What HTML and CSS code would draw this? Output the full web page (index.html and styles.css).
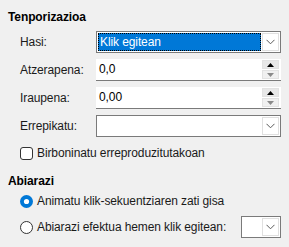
FILE: index.html
```html
<!DOCTYPE html>
<html>
<head>
<meta charset="utf-8">
<link rel="stylesheet" href="styles.css">
</head>
<body>
<div class="panel">
  <div class="heading">Tenporizazioa</div>
  <div class="form">
    <div class="label">Hasi:</div>
    <div class="combo focus">
      <div class="combo-value"><span class="sel">Klik egitean</span></div>
      <div class="combo-btn"><svg width="9" height="6" viewBox="0 0 9 6"><path d="M0.5 0.8 L4.5 4.8 L8.5 0.8" fill="none" stroke="#5a5a5a" stroke-width="1"/></svg></div>
    </div>

    <div class="label">Atzerapena:</div>
    <div class="spin">
      <div class="spin-value">0,0</div>
      <div class="spin-btns">
        <div class="sbtn up"><svg width="7" height="4" viewBox="0 0 7 4"><path d="M0 4 L3.5 0 L7 4 Z" fill="#000"/></svg></div>
        <div class="sbtn down"><svg width="7" height="4" viewBox="0 0 7 4"><path d="M0 0 L3.5 4 L7 0 Z" fill="#8a8a8a"/></svg></div>
      </div>
    </div>

    <div class="label">Iraupena:</div>
    <div class="spin">
      <div class="spin-value">0,00</div>
      <div class="spin-btns">
        <div class="sbtn up"><svg width="7" height="4" viewBox="0 0 7 4"><path d="M0 4 L3.5 0 L7 4 Z" fill="#000"/></svg></div>
        <div class="sbtn down"><svg width="7" height="4" viewBox="0 0 7 4"><path d="M0 0 L3.5 4 L7 0 Z" fill="#8a8a8a"/></svg></div>
      </div>
    </div>

    <div class="label">Errepikatu:</div>
    <div class="combo">
      <div class="combo-value"></div>
      <div class="combo-btn"><svg width="9" height="6" viewBox="0 0 9 6"><path d="M0.5 0.8 L4.5 4.8 L8.5 0.8" fill="none" stroke="#5a5a5a" stroke-width="1"/></svg></div>
    </div>
  </div>

  <div class="option check-row">
    <span class="checkbox"></span>
    <span>Birboninatu erreproduzitutakoan</span>
  </div>

  <div class="heading second">Abiarazi</div>

  <div class="option radio-row first">
    <svg class="radio" width="13" height="13" viewBox="0 0 13 13"><circle cx="6.5" cy="6.5" r="6.5" fill="#0078d7"/><circle cx="6.5" cy="6.5" r="2.6" fill="#fff"/></svg>
    <span>Animatu klik-sekuentziaren zati gisa</span>
  </div>
  <div class="option radio-row">
    <svg class="radio" width="13" height="13" viewBox="0 0 13 13"><circle cx="6.5" cy="6.5" r="6" fill="#fff" stroke="#333" stroke-width="1"/></svg>
    <span class="grow">Abiarazi efektua hemen klik egitean:</span>
    <div class="combo small">
      <div class="combo-value"></div>
      <div class="combo-btn"><svg width="9" height="6" viewBox="0 0 9 6"><path d="M0.5 0.8 L4.5 4.8 L8.5 0.8" fill="none" stroke="#5a5a5a" stroke-width="1"/></svg></div>
    </div>
  </div>
</div>
</body>
</html>
```

FILE: styles.css
```css
html, body {
  margin: 0;
  padding: 0;
  background: #f0f0f0;
}
body {
  font-family: "Liberation Sans", Arial, sans-serif;
  font-size: 12px;
  letter-spacing: -0.1px;
  color: #000;
  width: 289px;
  height: 247px;
  overflow: hidden;
}
.panel {
  padding: 9px 8px 0 8px;
}
.heading {
  font-weight: bold;
  line-height: 16px;
  height: 16px;
}
.heading.second {
  margin-top: 12px;
}
.form {
  margin-top: 6px;
  padding-left: 12px;
  display: grid;
  grid-template-columns: 76px 185px;
  grid-auto-rows: 22px;
  row-gap: 6px;
  align-items: center;
}
.label {
  line-height: 16px;
  color: #1a1a1a;
}
.combo {
  height: 22px;
  box-sizing: border-box;
  border: 1px solid #7a7a7a;
  background: #fff;
  display: flex;
}
.combo-value {
  flex: 1;
  padding: 1px;
  display: flex;
}
.combo .sel {
  flex: 1;
  background: #0078d7;
  color: #fff;
  outline: 1px dotted #000;
  outline-offset: -1px;
  line-height: 18px;
  padding-left: 2px;
}
.combo-btn {
  width: 17px;
  margin: 1px 1px 1px 0;
  box-sizing: border-box;
  border: 1px solid #e0e0e0;
  background: #fff;
  display: flex;
  align-items: center;
  justify-content: center;
}
.spin {
  height: 22px;
  box-sizing: border-box;
  background: #fff;
  border-bottom: 1px solid #7a7a7a;
  display: flex;
}
.spin-value {
  flex: 1;
  line-height: 21px;
  padding-left: 3px;
}
.spin-btns {
  width: 17px;
  margin: 1px 2px 1px 0;
  display: flex;
  flex-direction: column;
  gap: 1px;
}
.sbtn {
  flex: 1;
  box-sizing: border-box;
  border: 1px solid #e2e2e2;
  display: flex;
  align-items: center;
  justify-content: center;
}
.sbtn.up {
  background: #e8e8e8;
}
.sbtn.down {
  background: #f0f0f0;
}
.option {
  display: flex;
  align-items: center;
  padding-left: 12px;
  gap: 4px;
  color: #1a1a1a;
}
.check-row {
  margin-top: 8px;
  height: 16px;
}
.checkbox {
  width: 13px;
  height: 13px;
  box-sizing: border-box;
  border: 1px solid #333;
  border-radius: 3px;
  background: #fff;
  flex: none;
}
.radio-row {
  height: 22px;
  margin-top: 4px;
}
.radio-row.first {
  margin-top: 1px;
}
.radio {
  flex: none;
}
.grow {
  flex: 1;
  white-space: nowrap;
}
.combo.small {
  width: 40px;
  flex: none;
}
```
